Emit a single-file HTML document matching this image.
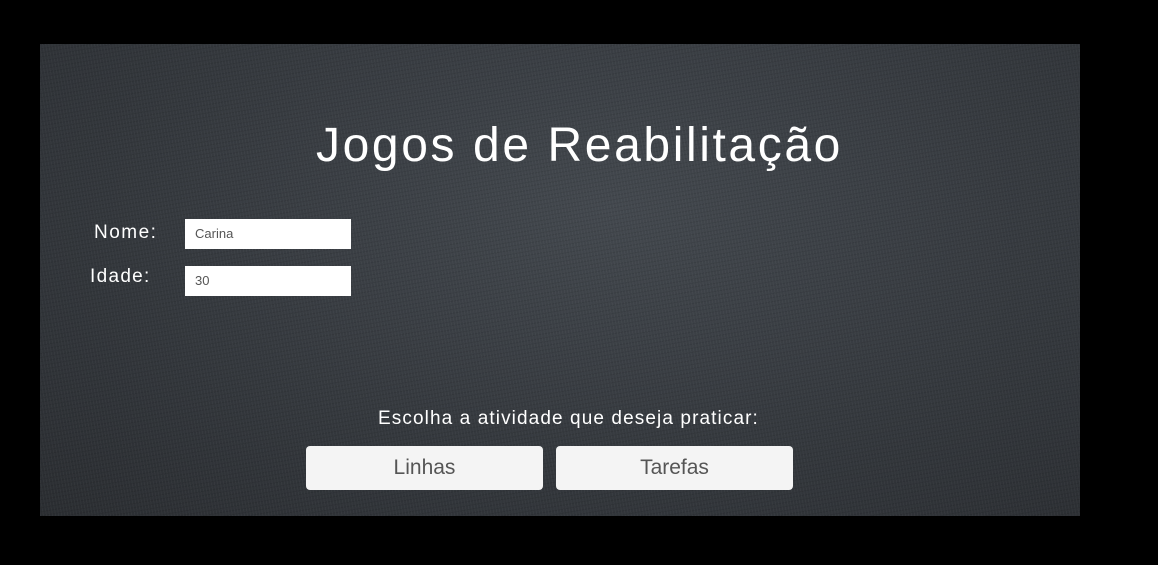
<!DOCTYPE html>
<html><head><meta charset="utf-8"><style>
html,body{margin:0;padding:0;width:1158px;height:565px;background:#000;overflow:hidden;font-family:"Liberation Sans",sans-serif}
#p{position:absolute;left:40px;top:44px;width:1040px;height:472px;
background:
repeating-linear-gradient(80deg,rgba(255,255,255,0.03) 0 1px,transparent 1px 3px),
repeating-linear-gradient(-10deg,rgba(0,0,0,0.08) 0 1px,transparent 1px 4px),
radial-gradient(ellipse at 55% 35%,#43484e 0%,#35393e 55%,#2a2d31 100%);}
.t{position:absolute;color:#fff;white-space:nowrap}
.in{position:absolute;background:#fff;width:166px;height:30px;color:#555;font-size:13px;line-height:30px;padding-left:10px;box-sizing:border-box}
.b{position:absolute;top:446px;width:237px;height:44px;background:#f4f4f4;border-radius:4px;color:#555;font-size:21px;text-align:center;line-height:44px}
</style></head><body>
<div id="p"></div>
<div class="t" style="left:316px;top:118px;font-size:48px;letter-spacing:2.6px">Jogos de Reabilitação</div>
<div class="t" style="left:94px;top:222px;font-size:19px;letter-spacing:1.5px">Nome:</div>
<div class="t" style="left:90px;top:266px;font-size:19px;letter-spacing:1.3px">Idade:</div>
<div class="in" style="left:185px;top:219px">Carina</div>
<div class="in" style="left:185px;top:266px">30</div>
<div class="t" style="left:378px;top:408px;font-size:19px;letter-spacing:1.1px">Escolha a atividade que deseja praticar:</div>
<div class="b" style="left:306px">Linhas</div>
<div class="b" style="left:556px">Tarefas</div>
</body></html>
